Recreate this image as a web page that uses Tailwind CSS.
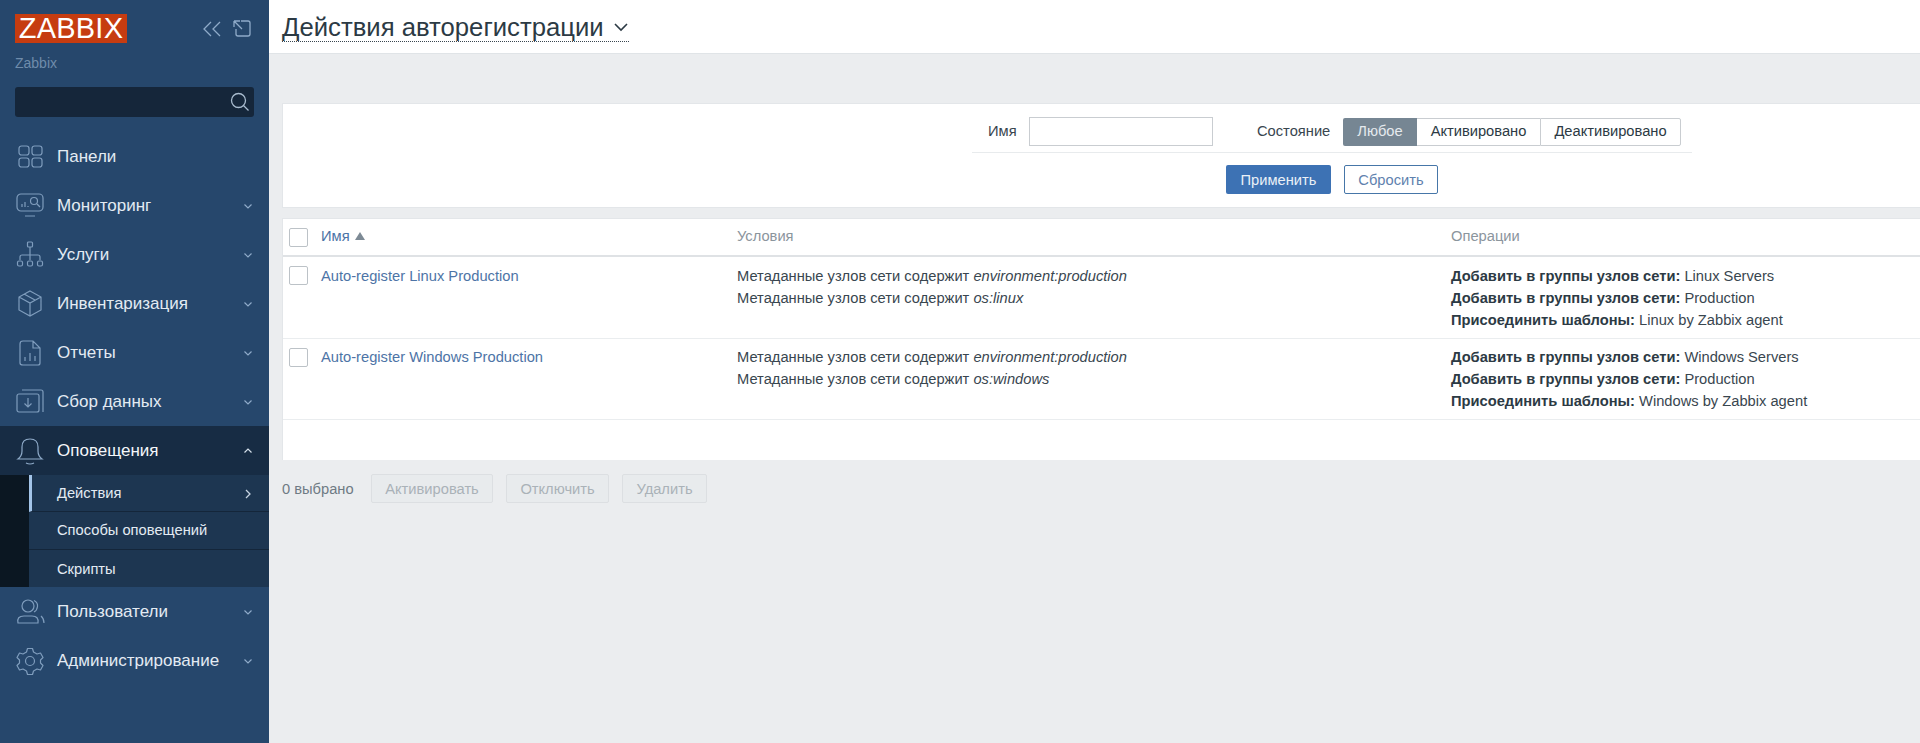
<!DOCTYPE html>
<html lang="ru">
<head>
    <meta charset="UTF-8">
    <title>Действия авторегистрации</title>
    <script src="https://cdn.jsdelivr.net/npm/@tailwindcss/browser@4"></script>
</head>
<body class="h-screen overflow-hidden flex bg-[#ebedef] font-['Liberation_Sans',Arial,sans-serif] text-[14.7px] text-[#39464f]">

    <!-- Sidebar -->
    <aside class="w-[269px] shrink-0 h-full bg-[#26476c] pt-[14px] text-[#e3ebf3]">
        <div class="flex items-center pl-[15px]">
            <div class="w-[112px] h-[29px] bg-[#c63c10] text-white text-[29px] leading-[29px] text-center tracking-[0.2px]">ZABBIX</div>
            <svg class="ml-[75px] w-[20px] h-[20px]" viewBox="0 0 20 20" fill="none" stroke="#8fabc9" stroke-width="1.300"><path d="M9 3 2 10l7 7M18 3l-7 7 7 7"/></svg>
            <svg class="ml-[10px] w-[20px] h-[20px]" viewBox="0 0 20 20" fill="none" stroke="#8fabc9" stroke-width="1.300"><path d="M9 2h7q2 0 2 2v11q0 2-2 2H6q-2 0-2-2v-5M2 2l8 8M2 2v6M2 2h6"/></svg>
        </div>
        <div class="mt-[10px] ml-[15px] h-[20px] leading-[20px] text-[14px] text-[#6f8cab]">Zabbix</div>
        <div class="mt-[14px] ml-[15px] w-[239px] h-[30px] bg-[#15263a] rounded-[3px] flex items-center justify-end pr-[4px]">
            <svg class="w-[20px] h-[20px]" viewBox="0 0 20 20" fill="none" stroke="#a9bccf" stroke-width="1.300"><circle cx="8.500" cy="8.500" r="7"/><path d="m13.500 13.500 5 5"/></svg>
        </div>

        <nav class="mt-[15px]">
            <a class="h-[49px] flex items-center text-[17px]">
                <svg class="w-[30px] h-[30px] ml-[15px] mr-[12px]" viewBox="0 0 30 30" fill="none" stroke="#7f9dbd" stroke-width="1.200"><rect x="4" y="4" width="10" height="9" rx="2.500"/><rect x="17" y="4" width="10" height="9" rx="2.500"/><rect x="4" y="16" width="10" height="9" rx="2.500"/><rect x="17" y="16" width="10" height="9" rx="2.500"/></svg>
                Панели
            </a>
            <a class="h-[49px] flex items-center text-[17px]">
                <svg class="w-[30px] h-[30px] ml-[15px] mr-[12px]" viewBox="0 0 30 30" fill="none" stroke="#7f9dbd" stroke-width="1.200"><rect x="2" y="3" width="26" height="17" rx="4"/><path d="M10 25h10M7 16v-3M10 16v-5M13 16v-1"/><circle cx="19" cy="10" r="3.500"/><path d="m22 13 3 3"/></svg>
                Мониторинг
                <svg class="ml-auto mr-[16px] w-[10px] h-[10px]" viewBox="0 0 10 10" fill="none" stroke="#8fabc9" stroke-width="1.200"><path d="m1.500 3.500 3.500 3.500 3.500-3.500"/></svg>
            </a>
            <a class="h-[49px] flex items-center text-[17px]">
                <svg class="w-[30px] h-[30px] ml-[15px] mr-[12px]" viewBox="0 0 30 30" fill="none" stroke="#7f9dbd" stroke-width="1.200"><rect x="12.500" y="2" width="5" height="5" rx="1"/><path d="M15 7v13M5 20v-3q0-2 2-2h16q2 0 2 2v3"/><rect x="2.500" y="21" width="5" height="5" rx="1.500"/><rect x="12.500" y="21" width="5" height="5" rx="1.500"/><rect x="22.500" y="21" width="5" height="5" rx="1.500"/></svg>
                Услуги
                <svg class="ml-auto mr-[16px] w-[10px] h-[10px]" viewBox="0 0 10 10" fill="none" stroke="#8fabc9" stroke-width="1.200"><path d="m1.500 3.500 3.500 3.500 3.500-3.500"/></svg>
            </a>
            <a class="h-[49px] flex items-center text-[17px]">
                <svg class="w-[30px] h-[30px] ml-[15px] mr-[12px]" viewBox="0 0 30 30" fill="none" stroke="#7f9dbd" stroke-width="1.200"><path d="m15 2 11 6v13l-11 6-11-6V8zM4 8l11 6 11-6M15 14v13M9 5l11 6"/></svg>
                Инвентаризация
                <svg class="ml-auto mr-[16px] w-[10px] h-[10px]" viewBox="0 0 10 10" fill="none" stroke="#8fabc9" stroke-width="1.200"><path d="m1.500 3.500 3.500 3.500 3.500-3.500"/></svg>
            </a>
            <a class="h-[49px] flex items-center text-[17px]">
                <svg class="w-[30px] h-[30px] ml-[15px] mr-[12px]" viewBox="0 0 30 30" fill="none" stroke="#7f9dbd" stroke-width="1.200"><path d="M18 3H8Q5 3 5 6v19q0 2 3 2h15q2 0 2-2V10zM18 3v7h7M10 23v-4M15 23v-8M20 23v-5"/></svg>
                Отчеты
                <svg class="ml-auto mr-[16px] w-[10px] h-[10px]" viewBox="0 0 10 10" fill="none" stroke="#8fabc9" stroke-width="1.200"><path d="m1.500 3.500 3.500 3.500 3.500-3.500"/></svg>
            </a>
            <a class="h-[49px] flex items-center text-[17px]">
                <svg class="w-[30px] h-[30px] ml-[15px] mr-[12px]" viewBox="0 0 30 30" fill="none" stroke="#7f9dbd" stroke-width="1.200"><rect x="2" y="7" width="22" height="18" rx="2"/><path d="M7 3h19q2 0 2 2v20M13 11v9M9.500 16.500 13 20l3.500-3.500"/></svg>
                Сбор данных
                <svg class="ml-auto mr-[16px] w-[10px] h-[10px]" viewBox="0 0 10 10" fill="none" stroke="#8fabc9" stroke-width="1.200"><path d="m1.500 3.500 3.500 3.500 3.500-3.500"/></svg>
            </a>
            <a class="h-[49px] flex items-center text-[17px] bg-[#172c44] text-[#f4f7fa]">
                <svg class="w-[30px] h-[30px] ml-[15px] mr-[12px]" viewBox="0 0 30 30" fill="none" stroke="#8fabc9" stroke-width="1.200"><path d="M3 23q4-3 4-8v-4q0-8 8-8t8 8v4q0 5 4 8zM11 27q4 2 8 0"/></svg>
                Оповещения
                <svg class="ml-auto mr-[16px] w-[10px] h-[10px]" viewBox="0 0 10 10" fill="none" stroke="#d5e0ea" stroke-width="1.200"><path d="m1.500 6.500 3.500-3.500 3.500 3.500"/></svg>
            </a>
            <!-- submenu -->
            <div class="flex bg-[#0b1722]">
                <div class="w-[29px] shrink-0"></div>
                <div class="flex-1">
                    <a class="h-[37px] pt-[1px] flex items-center pl-[25px] pr-[16px] bg-[#1d3651] border-l-[3px] border-[#a3c4e8] border-b border-b-[#14263a]">
                        Действия
                        <svg class="ml-auto w-[10px] h-[10px]" viewBox="0 0 10 10" fill="none" stroke="#c6d4e2" stroke-width="1.300"><path d="m3 1 4 4-4 4"/></svg>
                    </a>
                    <a class="h-[38px] flex items-center pl-[28px] bg-[#1d3651] border-b border-[#14263a]">Способы оповещений</a>
                    <a class="h-[37px] pt-[2px] flex items-center pl-[28px] bg-[#1d3651]">Скрипты</a>
                </div>
            </div>
            <a class="h-[49px] flex items-center text-[17px]">
                <svg class="w-[30px] h-[30px] ml-[15px] mr-[12px]" viewBox="0 0 30 30" fill="none" stroke="#7f9dbd" stroke-width="1.200"><circle cx="13" cy="9" r="6"/><path d="M19 3.500q4 2 3.500 6t-3.500 5.500M3 26q-1.500-7 6-7h8q7 0 6 7zM26 19q3 2.500 3 7"/></svg>
                Пользователи
                <svg class="ml-auto mr-[16px] w-[10px] h-[10px]" viewBox="0 0 10 10" fill="none" stroke="#8fabc9" stroke-width="1.200"><path d="m1.500 3.500 3.500 3.500 3.500-3.500"/></svg>
            </a>
            <a class="h-[49px] flex items-center text-[17px]">
                <svg class="w-[30px] h-[30px] ml-[15px] mr-[12px]" viewBox="0 0 30 30" fill="none" stroke="#7f9dbd" stroke-width="1.200"><circle cx="15" cy="15" r="4.500"/><path d="M12.500 2.500h5l1 3.500 3.500 2 3.500-1 2.500 4.500-2.500 2.500v3l2.500 2.500-2.500 4.500-3.500-1-3.500 2-1 3.500h-5l-1-3.500-3.500-2-3.500 1L2 19.500 4.500 17v-3L2 11.500 4.500 7 8 8l3.500-2z" stroke-linejoin="round"/></svg>
                Администрирование
                <svg class="ml-auto mr-[16px] w-[10px] h-[10px]" viewBox="0 0 10 10" fill="none" stroke="#8fabc9" stroke-width="1.200"><path d="m1.500 3.500 3.500 3.500 3.500-3.500"/></svg>
            </a>
        </nav>
    </aside>

    <!-- Main -->
    <main class="flex-1 min-w-0 h-full">
        <header class="h-[54px] bg-white border-b border-[#e0e4e7] pl-[13px] flex items-start">
            <h1 class="mt-[12px] h-[30px] flex items-center text-[25.7px] leading-[28px] text-[#2c3a44] border-b border-dotted border-[#39464f]">
                Действия авторегистрации
                <svg class="ml-[9px] w-[16px] h-[16px]" viewBox="0 0 16 16" fill="none" stroke="#2c3a44" stroke-width="1.600"><path d="m2 5 6 6 6-6"/></svg>
            </h1>
        </header>

        <div class="pl-[13px]">
            <!-- Filter -->
            <section class="mt-[49px] h-[105px] bg-white border border-r-0 border-[#e3e6e9] box-border">
                <div class="ml-[689px] w-[720px] pt-[13px]">
                    <div class="flex items-center h-[29px] pl-[16px]">
                        <span class="w-[28px]">Имя</span>
                        <input type="text" class="ml-[13px] w-[184px] h-[29px] bg-white border border-[#c9cdd1]">
                        <span class="ml-[44px] w-[74px] whitespace-nowrap">Состояние</span>
                        <div class="ml-[12px] flex h-[28px]">
                            <span class="w-[74px] flex items-center justify-center bg-[#768693] text-[#e5eaee] rounded-l-[2px]">Любое</span>
                            <span class="w-[123px] flex items-center justify-center border-y border-[#c9cdd1] text-[#2c3a44]">Активировано</span>
                            <span class="w-[141px] flex items-center justify-center border border-[#c9cdd1] rounded-r-[2px] text-[#2c3a44]">Деактивировано</span>
                        </div>
                    </div>
                    <div class="mt-[6px] border-t border-[#e8ebed]"></div>
                    <div class="mt-[12px] flex justify-center gap-[13px]">
                        <button class="w-[105px] h-[29px] pt-[1px] rounded-[2px] bg-[#3d72b4] text-[#eaf0f7]">Применить</button>
                        <button class="w-[94px] h-[29px] pt-[1px] rounded-[2px] bg-white border border-[#4676a8] text-[#5f82ae]">Сбросить</button>
                    </div>
                </div>
            </section>

            <!-- Table -->
            <section class="mt-[10px] h-[242px] bg-white border-l border-[#e3e6e9]">
                <div class="grid grid-cols-[38px_416px_714px_1fr] h-[37px] items-center border-t border-[#e3e6e9]">
                    <div class="pl-[6px]"><span class="block w-[19px] h-[19px] rounded-[2px] border border-[#bcc2c7] bg-white"></span></div>
                    <div class="text-[#4d74a6] flex items-center pb-[2px]">Имя<svg class="ml-[5px] w-[10px] h-[8px]" viewBox="0 0 10 8" fill="#7d8a95"><path d="M5 0l5 8H0z"/></svg></div>
                    <div class="text-[#8b959d] pb-[2px]">Условия</div>
                    <div class="text-[#8b959d] pb-[2px]">Операции</div>
                </div>
                <div class="border-t-2 border-[#dfe2e5]"></div>

                <div class="grid grid-cols-[38px_416px_714px_1fr] h-[82px] pt-[8px] leading-[22px] border-b border-[#eaedef]">
                    <div class="pl-[6px]"><span class="block w-[19px] h-[19px] mt-[1px] rounded-[2px] border border-[#bcc2c7] bg-white"></span></div>
                    <div><a class="text-[#4d74a6]">Auto-register Linux Production</a></div>
                    <div>
                        <div>Метаданные узлов сети содержит <i>environment:production</i></div>
                        <div>Метаданные узлов сети содержит <i>os:linux</i></div>
                    </div>
                    <div>
                        <div><b class="text-[#2c3a44]">Добавить в группы узлов сети:</b> Linux Servers</div>
                        <div><b class="text-[#2c3a44]">Добавить в группы узлов сети:</b> Production</div>
                        <div><b class="text-[#2c3a44]">Присоединить шаблоны:</b> Linux by Zabbix agent</div>
                    </div>
                </div>

                <div class="grid grid-cols-[38px_416px_714px_1fr] h-[81px] pt-[7px] leading-[22px] border-b border-[#eaedef]">
                    <div class="pl-[6px]"><span class="block w-[19px] h-[19px] mt-[2px] rounded-[2px] border border-[#bcc2c7] bg-white"></span></div>
                    <div><a class="text-[#4d74a6]">Auto-register Windows Production</a></div>
                    <div>
                        <div>Метаданные узлов сети содержит <i>environment:production</i></div>
                        <div>Метаданные узлов сети содержит <i>os:windows</i></div>
                    </div>
                    <div>
                        <div><b class="text-[#2c3a44]">Добавить в группы узлов сети:</b> Windows Servers</div>
                        <div><b class="text-[#2c3a44]">Добавить в группы узлов сети:</b> Production</div>
                        <div><b class="text-[#2c3a44]">Присоединить шаблоны:</b> Windows by Zabbix agent</div>
                    </div>
                </div>
            </section>

            <!-- Action bar -->
            <div class="mt-[14px] flex items-center h-[29px] text-[#6f7b84]">
                <span class="w-[89px] pt-[1px]">0 выбрано</span>
                <div class="flex gap-[13px] text-[#aab2b8]">
                    <button class="w-[122px] h-[29px] pt-[1px] rounded-[2px] border border-[#dcdfe2] bg-[#e8ebed]">Активировать</button>
                    <button class="w-[103px] h-[29px] pt-[1px] rounded-[2px] border border-[#dcdfe2] bg-[#e8ebed]">Отключить</button>
                    <button class="w-[85px] h-[29px] pt-[1px] rounded-[2px] border border-[#dcdfe2] bg-[#e8ebed]">Удалить</button>
                </div>
            </div>
        </div>
    </main>
</body>
</html>
